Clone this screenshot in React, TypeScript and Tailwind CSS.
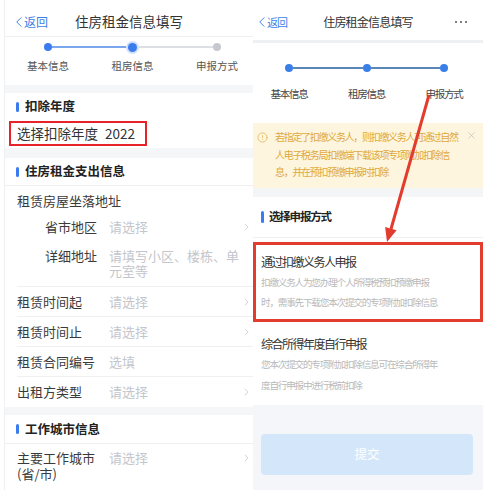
import { CircleAlert, X } from "lucide-react";

const fontCls = "font-['Noto_Sans_CJK_SC','Liberation_Sans',sans-serif]";

function Chevron({ className = "" }: { className?: string }) {
  return (
    <svg viewBox="0 0 6 10" className={"w-[5px] h-[8px] " + className} fill="none">
      <path d="M1 1l4 4-4 4" stroke="currentColor" strokeWidth="1" />
    </svg>
  );
}

function BackLink({ size }: { size: string }) {
  return (
    <div className={"flex items-center gap-[2px] text-[#3d7fe6] " + size}>
      <svg viewBox="0 0 8 14" className="w-[6px] h-[12px]" fill="none">
        <path d="M7 1L1 7l6 6" stroke="currentColor" strokeWidth="1.3" />
      </svg>
      <span>返回</span>
    </div>
  );
}

function SectionTitle({ title, h, border = false }: { title: string; h: string; border?: boolean }) {
  return (
    <div className={"flex items-center pl-[11px] bg-white " + h + (border ? " border-b border-[#f0f0f0]" : "")}>
      <span className="w-[3px] h-[10px] rounded-sm bg-[#3a7cf0]" />
      <span className="ml-[6px] text-[12.5px] font-bold text-[#222]">{title}</span>
    </div>
  );
}

function Row({
  label,
  value,
  arrow = true,
  border = true,
}: {
  label: string;
  value: string;
  arrow?: boolean;
  border?: boolean;
}) {
  return (
    <div className={"ml-[12px] h-[30px] flex items-center" + (border ? " border-b border-[#f0f0f0]" : "")}>
      <span className="w-[92px] text-[13px] text-[#3a3a3a]">{label}</span>
      <span className="flex-1 text-[13px] text-[#c3c6cc]">{value}</span>
      {arrow && <Chevron className="text-[#c8c8c8] mr-[4px]" />}
    </div>
  );
}

function LeftPanel() {
  return (
    <div className="w-[249px] ml-[4px] h-full border-l border-[#eef0f3] bg-white flex flex-col">
      {/* header */}
      <div className="h-[37px] pt-[7px] grid grid-cols-[1fr_auto_1fr] items-center border-b border-[#f0f0f0] px-[11px]">
        <BackLink size="text-[12px]" />
        <span className="text-[13.5px] text-[#333]">住房租金信息填写</span>
        <span />
      </div>

      {/* stepper */}
      <div className="h-[48px] pt-[4px]">
        <div className="ml-[37px] w-[181px] h-[12px] flex items-center">
          <span className="w-[8px] h-[8px] rounded-full bg-[#3a7cf0] ml-[2px]" />
          <span className="flex-1 h-[1.5px] bg-[#7aa6ee]" />
          <span className="w-[13px] h-[13px] rounded-full bg-[#cfe0fb] flex items-center justify-center">
            <span className="w-[9px] h-[9px] rounded-full bg-[#3a7cf0]" />
          </span>
          <span className="flex-1 h-[1.5px] bg-[#dcdfe4]" />
          <span className="w-[8px] h-[8px] rounded-full bg-[#c5c8ce] mr-[2px]" />
        </div>
        <div className="mt-[6px] ml-[13px] flex gap-[24.5px] text-[10.5px] leading-[14px] text-[#555]">
          <span className="w-[60px] text-center">基本信息</span>
          <span className="w-[60px] text-center">租房信息</span>
          <span className="w-[60px] text-center">申报方式</span>
        </div>
      </div>

      <div className="h-[8px] bg-[#f5f6f8]" />
      <SectionTitle title="扣除年度" h="h-[27px]" />
      <div className="h-[28px] pt-[1px]">
        <div className="ml-[4px] w-[138px] h-[25px] border-2 border-[#e8222a] flex items-center pl-[6px] text-[13.5px] text-[#333]">
          <span className="w-[88px]">选择扣除年度</span>
          <span>2022</span>
        </div>
      </div>
      <div className="h-[10px] bg-[#f5f6f8]" />

      <SectionTitle title="住房租金支出信息" h="h-[28px]" border />
      <div className="ml-[12px] border-b border-[#f0f0f0]">
        <div className="h-[30px] flex items-center text-[13px] text-[#3a3a3a]">租赁房屋坐落地址</div>
        <div className="h-[21px] flex items-center">
          <span className="pl-[28px] w-[92px] text-[13px] text-[#3a3a3a]">省市地区</span>
          <span className="flex-1 text-[13px] text-[#c3c6cc]">请选择</span>
          <Chevron className="text-[#c8c8c8] mr-[4px]" />
        </div>
        <div className="h-[49px] pt-[11px] flex">
          <span className="pl-[28px] w-[92px] text-[13px] leading-[15px] text-[#3a3a3a]">详细地址</span>
          <div className="text-[13px] leading-[15px] text-[#c3c6cc] whitespace-nowrap">
            <div>请填写小区、楼栋、单</div>
            <div>元室等</div>
          </div>
        </div>
      </div>
      <Row label="租赁时间起" value="请选择" />
      <Row label="租赁时间止" value="请选择" />
      <Row label="租赁合同编号" value="选填" arrow={false} />
      <Row label="出租方类型" value="请选择" border={false} />
      <div className="h-[8px] bg-[#f5f6f8]" />

      <SectionTitle title="工作城市信息" h="h-[29px]" border />
      <div className="ml-[12px] pt-[6px] flex items-start">
        <div className="w-[92px] text-[13px] leading-[16px] text-[#3a3a3a]">
          <div>主要工作城市</div>
          <div>(省/市)</div>
        </div>
        <span className="flex-1 text-[13px] leading-[16px] text-[#c3c6cc]">请选择</span>
        <Chevron className="text-[#c8c8c8] mr-[4px] mt-[4px]" />
      </div>
    </div>
  );
}

function RightPanel() {
  return (
    <div className="w-[230px] h-full bg-white flex flex-col">
      {/* header */}
      <div className="h-[40px] pt-[4px] px-[6px] grid grid-cols-[1fr_auto_1fr] items-center">
        <BackLink size="text-[11px] tracking-[-1px]" />
        <span className="text-[12px] tracking-[-0.8px] text-[#333]">住房租金信息填写</span>
        <span className="justify-self-end mr-[10px] flex gap-[3px]">
          <span className="w-[2px] h-[2px] rounded-full bg-[#555]" />
          <span className="w-[2px] h-[2px] rounded-full bg-[#555]" />
          <span className="w-[2px] h-[2px] rounded-full bg-[#555]" />
        </span>
      </div>
      <div className="h-[3px] bg-[#eff0f2]" />

      {/* stepper */}
      <div className="h-[80px] pt-[20px]">
        <div className="ml-[32px] w-[163px] h-[10px] flex items-center">
          <span className="w-[8px] h-[8px] rounded-full bg-[#3a7ee8]" />
          <span className="flex-1 h-[1.5px] bg-[#5b86b8]" />
          <span className="w-[8px] h-[8px] rounded-full bg-[#3a7ee8]" />
          <span className="flex-1 h-[1.5px] bg-[#5b86b8]" />
          <span className="w-[8px] h-[8px] rounded-full bg-[#3a7ee8]" />
        </div>
        <div className="mt-[14px] ml-[6px] flex gap-[17.5px] text-[10.5px] tracking-[-1.2px] leading-[14px] text-[#444]">
          <span className="w-[60px] text-center">基本信息</span>
          <span className="w-[60px] text-center">租房信息</span>
          <span className="w-[60px] text-center">申报方式</span>
        </div>
      </div>

      {/* notice */}
      <div className="h-[65px] bg-[#fdf5dd] flex pt-[5px]">
        <CircleAlert className="ml-[4px] mt-[4px] w-[11px] h-[11px] shrink-0 text-[#e2ae48]" strokeWidth={1.5} />
        <div className="ml-[7px] w-[182px] shrink-0 text-[10px] tracking-[-1.3px] leading-[17.5px] text-[#e0a83c] whitespace-nowrap">
          <div>若指定了扣缴义务人，则扣缴义务人可通过自然</div>
          <div>人电子税务局扣缴端下载该项专项附加扣除信</div>
          <div>息，并在预扣预缴申报时扣除</div>
        </div>
        <X className="ml-[9px] mt-[2px] w-[11px] h-[11px] shrink-0 text-[#b5b5b5]" strokeWidth={1.3} />
      </div>
      <div className="h-[9px] bg-[#f4f5f7]" />

      <div className="h-[41px] flex items-center pl-[8px] border-b border-[#f0f0f0]">
        <span className="w-[3px] h-[12px] rounded-sm bg-[#3a7cf0]" />
        <span className="ml-[5px] text-[11.5px] tracking-[-1.2px] font-bold text-[#222]">选择申报方式</span>
      </div>

      <div className="mt-[4px] h-[80px] border-[3px] border-[#e23c2f] pl-[5px] pt-[9px]">
        <div className="text-[12px] leading-[16px] tracking-[-1.5px] text-[#333]">通过扣缴义务人申报</div>
        <div className="mt-[2px] text-[9.6px] leading-[20px] tracking-[-1.2px] text-[#b9b9b9] whitespace-nowrap">
          <div>扣缴义务人为您办理个人所得税预扣预缴申报</div>
          <div>时，需事先下载您本次提交的专项附加扣除信息</div>
        </div>
      </div>

      <div className="h-[83px] pl-[8px] pt-[14px]">
        <div className="text-[12px] leading-[16px] tracking-[-1.5px] text-[#333]">综合所得年度自行申报</div>
        <div className="mt-[2px] text-[9.6px] leading-[20.5px] tracking-[-1.2px] text-[#b9b9b9] whitespace-nowrap">
          <div>您本次提交的专项附加扣除信息可在综合所得年</div>
          <div>度自行申报中进行税前扣除</div>
        </div>
      </div>

      <div className="flex-1 bg-[#f4f6f9] pt-[29px]">
        <div className="ml-[8px] w-[212px] h-[41px] rounded-[4px] bg-[#d4e6fa] flex items-center justify-center text-[12.5px] text-white">
          提交
        </div>
      </div>
    </div>
  );
}

export default function App() {
  return (
    <div className={"relative w-[488px] h-[490px] overflow-hidden bg-white flex " + fontCls}>
      <LeftPanel />
      <RightPanel />
      {/* annotation arrow */}
      <svg className="absolute left-0 top-0 w-[488px] h-[490px] pointer-events-none" viewBox="0 0 488 490">
        <line x1="429" y1="95" x2="391" y2="229" stroke="#e23c2f" strokeWidth="3" />
        <polygon points="387,242 396.6,230.2 385.1,226.9" fill="#e23c2f" />
      </svg>
    </div>
  );
}
